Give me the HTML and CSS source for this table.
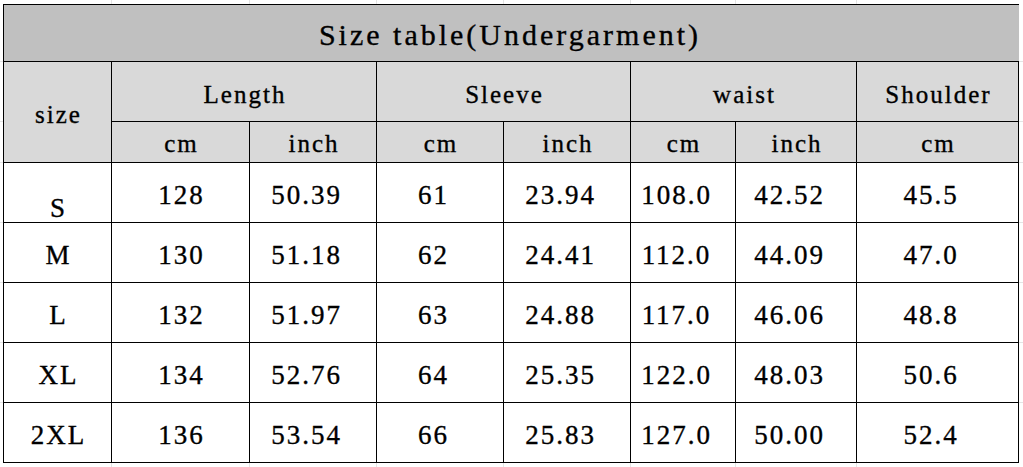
FILE: index.html
```html
<!DOCTYPE html>
<html lang="en">
<head>
<meta charset="utf-8">
<title>Size table (Undergarment)</title>
<link rel="stylesheet" href="styles.css">
</head>
<body>
<div class="sheet">
  <div class="size-table">
    <div class="cell title">Size table(Undergarment)</div>

    <div class="cell head size-head">size</div>
    <div class="cell head group">Length</div>
    <div class="cell head group">Sleeve</div>
    <div class="cell head group">waist</div>
    <div class="cell head">Shoulder</div>

    <div class="cell head unit">cm</div>
    <div class="cell head unit">inch</div>
    <div class="cell head unit">cm</div>
    <div class="cell head unit">inch</div>
    <div class="cell head unit">cm</div>
    <div class="cell head unit">inch</div>
    <div class="cell head unit">cm</div>

    <div class="cell data label label-low">S</div>
    <div class="cell data">128</div>
    <div class="cell data pad">50.39</div>
    <div class="cell data pad">61</div>
    <div class="cell data pad">23.94</div>
    <div class="cell data pad">108.0</div>
    <div class="cell data pad">42.52</div>
    <div class="cell data pad">45.5</div>

    <div class="cell data label">M</div>
    <div class="cell data">130</div>
    <div class="cell data pad">51.18</div>
    <div class="cell data pad">62</div>
    <div class="cell data pad">24.41</div>
    <div class="cell data pad">112.0</div>
    <div class="cell data pad">44.09</div>
    <div class="cell data pad">47.0</div>

    <div class="cell data label">L</div>
    <div class="cell data">132</div>
    <div class="cell data pad">51.97</div>
    <div class="cell data pad">63</div>
    <div class="cell data pad">24.88</div>
    <div class="cell data pad">117.0</div>
    <div class="cell data pad">46.06</div>
    <div class="cell data pad">48.8</div>

    <div class="cell data label">XL</div>
    <div class="cell data">134</div>
    <div class="cell data pad">52.76</div>
    <div class="cell data pad">64</div>
    <div class="cell data pad">25.35</div>
    <div class="cell data pad">122.0</div>
    <div class="cell data pad">48.03</div>
    <div class="cell data pad">50.6</div>

    <div class="cell data label">2XL</div>
    <div class="cell data">136</div>
    <div class="cell data pad">53.54</div>
    <div class="cell data pad">66</div>
    <div class="cell data pad">25.83</div>
    <div class="cell data pad">127.0</div>
    <div class="cell data pad">50.00</div>
    <div class="cell data pad">52.4</div>
  </div>
</div>
</body>
</html>
```
FILE: styles.css
```css
html, body {
  margin: 0;
  padding: 0;
  background: #ffffff;
}

body {
  font-family: "Liberation Serif", "Times New Roman", serif;
  color: #000000;
}

/* spreadsheet canvas with faint gridlines continuing the table's columns and rows */
.sheet {
  box-sizing: border-box;
  width: 1023px;
  height: 467px;
  padding: 4px 0 0 3px;
  background-color: #ffffff;
  background-repeat: no-repeat;
  background-image:
    linear-gradient(#e4e4e4, #e4e4e4),
    linear-gradient(#e4e4e4, #e4e4e4),
    linear-gradient(#e4e4e4, #e4e4e4),
    linear-gradient(#e4e4e4, #e4e4e4),
    linear-gradient(#e4e4e4, #e4e4e4),
    linear-gradient(#e4e4e4, #e4e4e4),
    linear-gradient(#e4e4e4, #e4e4e4),
    linear-gradient(#e4e4e4, #e4e4e4),
    linear-gradient(#e4e4e4, #e4e4e4),
    linear-gradient(#e4e4e4, #e4e4e4),
    linear-gradient(#e4e4e4, #e4e4e4),
    linear-gradient(#e4e4e4, #e4e4e4),
    linear-gradient(#e4e4e4, #e4e4e4),
    linear-gradient(#e4e4e4, #e4e4e4);
  background-size:
    1px 100%, 1px 100%, 1px 100%, 1px 100%, 1px 100%, 1px 100%, 1px 100%,
    100% 1px, 100% 1px, 100% 1px, 100% 1px, 100% 1px, 100% 1px, 100% 1px;
  background-position:
    111px 0, 249px 0, 376px 0, 503px 0, 630px 0, 735px 0, 856px 0,
    0 61px, 0 121px, 0 162px, 0 222px, 0 282px, 0 342px, 0 402px;
}

.size-table {
  display: grid;
  grid-template-columns: 107px 137px 126px 126px 126px 104px 120px 161px;
  grid-template-rows: 56px 59px 40px repeat(5, 59px);
  gap: 1px;
  padding: 1px;
  background: #000000;
  width: max-content;
}

.cell {
  display: flex;
  align-items: center;
  justify-content: center;
  background: #ffffff;
  line-height: 1;
  white-space: nowrap;
  box-sizing: border-box;
  -webkit-text-stroke: 0.35px #000000;
}

.title {
  grid-column: 1 / -1;
  margin-right: -1px;
  background: #c0c0c0;
  font-size: 30px;
  letter-spacing: 3px;
  padding: 4px 6px 0 3px;
}

.head {
  background: #d9d9d9;
  font-size: 25px;
  letter-spacing: 2px;
  padding: 5px 0 0 2px;
}

.group {
  grid-column: span 2;
}

.size-head {
  grid-row: span 2;
  padding-top: 4px;
}

.unit {
  padding-top: 2px;
}

.data {
  font-size: 27px;
  letter-spacing: 2px;
  padding: 6px 0 0 2px;
}

.data.pad {
  padding-right: 15px;
}

.label-low {
  padding-top: 31px;
}
```
